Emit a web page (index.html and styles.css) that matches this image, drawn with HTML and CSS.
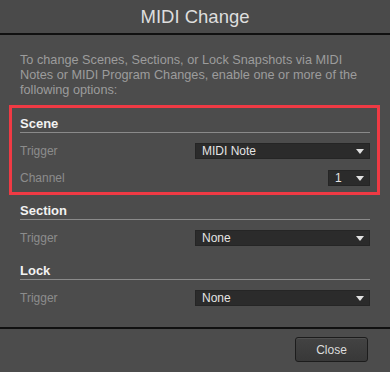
FILE: index.html
```html
<!DOCTYPE html>
<html lang="en">
<head>
<meta charset="utf-8">
<title>MIDI Change</title>
<link rel="stylesheet" href="styles.css">
</head>
<body>
<div class="dialog">
  <div class="titlebar">MIDI Change</div>
  <p class="intro">To change Scenes, Sections, or Lock Snapshots via MIDI Notes or MIDI Program Changes, enable one or more of the following options:</p>

  <div class="group highlight">
    <div class="group-title">Scene</div>
    <div class="row first">
      <span class="label">Trigger</span>
      <div class="select wide"><span>MIDI Note</span><svg class="arrow" width="8" height="5" viewBox="0 0 8 5"><polygon points="0,0 8,0 4,5" /></svg></div>
    </div>
    <div class="row">
      <span class="label">Channel</span>
      <div class="select narrow"><span>1</span><svg class="arrow" width="8" height="5" viewBox="0 0 8 5"><polygon points="0,0 8,0 4,5" /></svg></div>
    </div>
  </div>

  <div class="group plain">
    <div class="group-title">Section</div>
    <div class="row first">
      <span class="label">Trigger</span>
      <div class="select wide"><span>None</span><svg class="arrow" width="8" height="5" viewBox="0 0 8 5"><polygon points="0,0 8,0 4,5" /></svg></div>
    </div>
  </div>

  <div class="group plain lock">
    <div class="group-title">Lock</div>
    <div class="row first">
      <span class="label">Trigger</span>
      <div class="select wide"><span>None</span><svg class="arrow" width="8" height="5" viewBox="0 0 8 5"><polygon points="0,0 8,0 4,5" /></svg></div>
    </div>
  </div>

  <div class="footer">
    <button class="btn" type="button">Close</button>
  </div>
</div>
</body>
</html>
```

FILE: styles.css
```css
html, body {
  margin: 0;
  padding: 0;
  background: #4c4c4c;
}
body {
  width: 390px;
  height: 372px;
  overflow: hidden;
  font-family: "Liberation Sans", Arial, sans-serif;
}
.dialog {
  display: flex;
  flex-direction: column;
  height: 372px;
  background: #4c4c4c;
}
.titlebar {
  height: 33px;
  line-height: 33px;
  text-align: center;
  font-size: 18.5px;
  color: #dedede;
  background: #4a4a4a;
  border-bottom: 2px solid #101010;
}
.intro {
  margin: 18px 20px 0 20px;
  font-size: 12.7px;
  line-height: 15px;
  color: #9c9c9c;
  height: 45px;
}
.group-title {
  font-size: 13px;
  font-weight: bold;
  line-height: 16px;
  color: #f2f2f2;
  border-bottom: 1px solid #8a8a8a;
}
.highlight {
  margin: 7px 10px 0 9px;
  border: 3px solid #ef3a44;
  padding: 0 7px 6px 8px;
}
.highlight .group-title {
  margin-top: 8px;
}
.plain {
  padding: 0 20px;
}
.plain .group-title {
  margin-top: 8px;
}
.plain.lock .group-title {
  margin-top: 17px;
}
.row {
  display: flex;
  justify-content: space-between;
  align-items: center;
  height: 16px;
  margin-top: 11px;
}
.row.first {
  margin-top: 10px;
}
.label {
  font-size: 12px;
  color: #8c8c8c;
}
.select {
  box-sizing: border-box;
  height: 16px;
  display: flex;
  align-items: center;
  justify-content: space-between;
  padding: 0 5px 0 6px;
  background: #2b2b2b;
  border: 1px solid #252525;
  font-size: 12px;
  color: #e4e4e4;
}
.select.wide {
  width: 175px;
}
.select.narrow {
  width: 42px;
}
.arrow {
  fill: #e0e0e0;
  display: block;
}
.footer {
  margin-top: 21px;
  border-top: 2px solid #101010;
  padding: 8px 22px 0 0;
  display: flex;
  justify-content: flex-end;
  flex: 1;
}
.btn {
  width: 73px;
  height: 25px;
  box-sizing: border-box;
  border: 1px solid #1c1c1c;
  border-radius: 3px;
  background: linear-gradient(#434343, #383838);
  color: #dcdcdc;
  font-family: "Liberation Sans", Arial, sans-serif;
  font-size: 12px;
  padding: 0;
  box-shadow: inset 0 1px 0 #505050;
}
```
